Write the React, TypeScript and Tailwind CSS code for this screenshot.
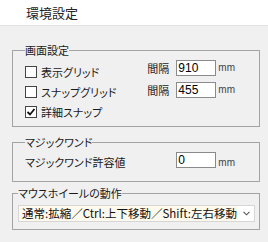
import React from "react";

const jp = { fontFamily: '"Noto Sans CJK JP", "Noto Sans", sans-serif', fontFeatureSettings: '"palt"' } as React.CSSProperties;

function Check({ checked, label }: { checked?: boolean; label: string }) {
  return (
    <div className="flex h-[20px] items-center">
      <div className="flex h-[12px] w-[12px] items-center justify-center border border-[#444] bg-white">
        {checked && (
          <svg width="10" height="10" viewBox="0 0 10 10">
            <path d="M1.5 5 L4 7.5 L8.5 2" fill="none" stroke="#111" strokeWidth="1.8" />
          </svg>
        )}
      </div>
      <span className="ml-[4px] text-[11px] leading-none text-[#1a1a1a]">{label}</span>
    </div>
  );
}

function NumInput({ value }: { value: string }) {
  return (
    <div className="flex h-[16px] w-[40px] items-center border border-[#8a8a8a] bg-white pl-[1px] text-[12px] leading-none text-black" style={{ fontFamily: '"Liberation Sans", Arial, sans-serif' }}>
      {value}
    </div>
  );
}

function Mm() {
  return <span className="ml-[2px] text-[10px] leading-none text-[#444]" style={{ fontFamily: '"Liberation Sans", Arial, sans-serif' }}>mm</span>;
}

export default function App() {
  return (
    <div className="h-[242px] w-[268px] overflow-hidden bg-[#f0f0f0] text-[#1a1a1a]" style={jp}>
      <div className="flex h-[26px] items-center border-b border-[#e2e2e2] bg-white pl-[26px] pb-[1px]">
        <span className="text-[13px] leading-none text-[#222]">環境設定</span>
      </div>
      <div className="pl-[12px] pr-[8px]">
        <fieldset className="mt-[17px] border border-[#a3a3a3] pt-[3px] pb-[4px] pl-[12px] pr-[24px]">
          <legend className="p-0 text-[11px] leading-[14px]">画面設定</legend>
          <div className="flex justify-between">
            <div className="flex flex-col pt-[2px]">
              <Check label="表示グリッド" />
              <Check label="スナップグリッド" />
              <Check checked label="詳細スナップ" />
            </div>
            <div className="flex flex-col gap-[6px]">
              <div className="flex items-center">
                <span className="mr-[7px] text-[11px] leading-none">間隔</span>
                <NumInput value="910" />
                <Mm />
              </div>
              <div className="flex items-center">
                <span className="mr-[7px] text-[11px] leading-none">間隔</span>
                <NumInput value="455" />
                <Mm />
              </div>
            </div>
          </div>
        </fieldset>

        <fieldset className="mt-[8px] border border-[#a3a3a3] pt-[3px] pb-[13px] pl-[12px] pr-[24px]">
          <legend className="p-0 text-[11px] leading-[14px]">マジックワンド</legend>
          <div className="flex items-center justify-between">
            <span className="mt-[4px] text-[11px] leading-none">マジックワンド許容値</span>
            <div className="flex items-end">
              <NumInput value="0" />
              <Mm />
            </div>
          </div>
        </fieldset>

        <fieldset className="mt-[4px] border border-[#a3a3a3] pt-[5px] pb-[7px] pl-[5px] pr-[4px]">
          <legend className="p-0 text-[11px] leading-[14px]">マウスホイールの動作</legend>
          <div className="flex h-[17px] items-stretch border border-[#d6d6d6] bg-white">
            <div className="flex flex-1 items-center overflow-hidden whitespace-nowrap bg-[#fdf9ec] pl-[3px] text-[11.5px] leading-none text-[#111]">
              通常:拡縮／Ctrl:上下移動／Shift:左右移動
            </div>
            <div className="flex w-[16px] items-center justify-center bg-white">
              <svg width="7" height="5" viewBox="0 0 7 5">
                <path d="M0.5 0.8 L3.5 3.8 L6.5 0.8" fill="none" stroke="#555" strokeWidth="1.1" />
              </svg>
            </div>
          </div>
        </fieldset>
      </div>
    </div>
  );
}
